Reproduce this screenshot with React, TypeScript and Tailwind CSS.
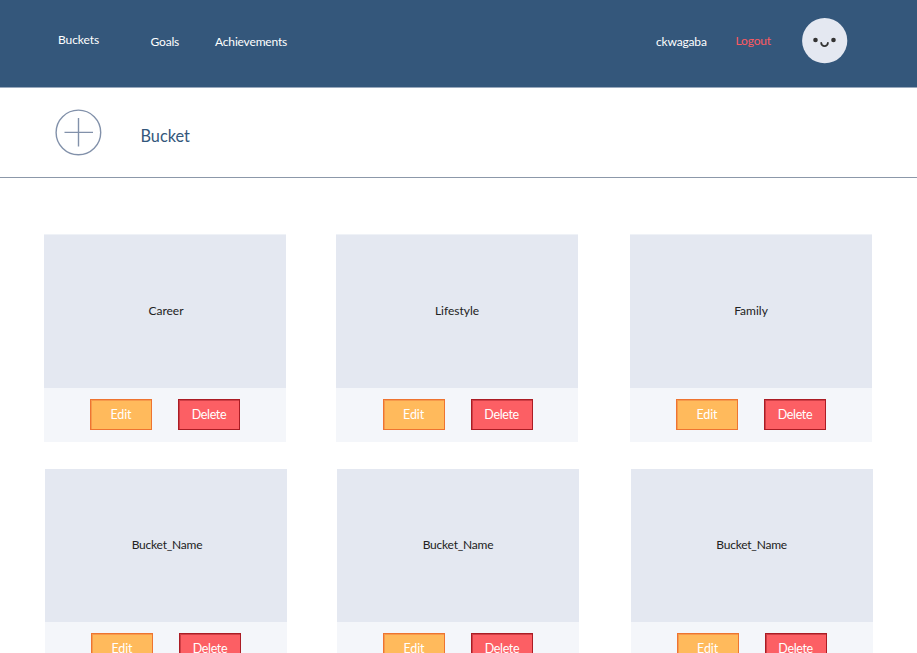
import React from "react";

const buttonBase =
  "h-[31px] w-[62px] border text-[12.5px] leading-[28px] text-white text-center";

type CardProps = { name: string; className?: string; panelClass?: string; actionsClass?: string };

function BucketCard({ name, className = "", panelClass = "", actionsClass = "pl-[46px]" }: CardProps) {
  return (
    <article className={`w-[242px] shrink-0 bg-[#f4f6fa] ${className}`}>
      <div className={`h-[153px] bg-[#e4e8f1] pt-[68px] text-center text-[12px] leading-4 text-[#222222] ${panelClass}`}>
        {name}
      </div>
      <div className={`flex h-[54px] gap-[26px] pt-[11px] ${actionsClass}`}>
        <button className={`${buttonBase} tracking-[-0.1px] border-[#ee7430] bg-[#ffba5c] shadow-[inset_1px_1px_#f69a4c]`}>Edit</button>
        <button className={`${buttonBase} tracking-[-0.35px] border-[#ab1c24] bg-[#fc5f64] shadow-[inset_1px_1px_#cf3f46]`}>Delete</button>
      </div>
    </article>
  );
}

function Avatar() {
  return (
    <svg className="ml-[31px] mt-[18px] h-[46px] w-[46px]" viewBox="0 0 46 46" fill="none">
      <circle cx="22.7" cy="22.7" r="22.6" fill="#e4e8f1" />
      <circle cx="13.5" cy="22" r="2.3" fill="#333333" />
      <circle cx="31.5" cy="22" r="2.3" fill="#333333" />
      <path d="M19.2 24.8a3.35 3.35 0 0 0 6.7 0" stroke="#333333" strokeWidth="1.8" strokeLinecap="round" />
    </svg>
  );
}

export default function App() {
  return (
    <div className="h-[653px] w-[917px] overflow-hidden bg-white font-['Lato',sans-serif]">
      <header className="flex h-[88px] items-start border-b border-[#99a9bd] bg-[#34577b] pl-[58px] text-[12px] leading-4 tracking-[-0.17px] text-white">
        <nav className="flex">
          <a className="mt-8 w-[92.5px] tracking-[-0.08px]">Buckets</a>
          <a className="mt-[34px] w-[64.5px]">Goals</a>
          <a className="mt-[34px] w-[441px]">Achievements</a>
        </nav>
        <span className="mt-[34px] w-[79.5px]">ckwagaba</span>
        <a className="mt-[33px] w-[35.5px] text-[#fc5a61]">Logout</a>
        <Avatar />
      </header>

      <section className="flex h-[90px] items-start border-b border-[#8c98a9] pl-[55px]">
        <svg className="mt-[21px] h-[47px] w-[47px]" viewBox="0 0 47 47" fill="none" stroke="#8291aa" strokeWidth="1.4">
          <circle cx="23.4" cy="23.4" r="22.3" />
          <path d="M9.5 23.4h28.5M23.5 9v28.5" />
        </svg>
        <h1 className="ml-[38.5px] mt-[36px] text-[16.3px] leading-6 text-[#34577b]">Bucket</h1>
      </section>

      <main className="pt-[56px]">
        <div className="flex pl-[44px]">
          <BucketCard name="Career" className="border-t border-[#eff2f7]" panelClass="pl-[2px]" />
          <BucketCard name="Lifestyle" className="ml-[50px] border-t border-[#eff2f7]" actionsClass="pl-[46.6px]" />
          <BucketCard name="Family" className="ml-[52px] border-t border-[#eff2f7]" />
        </div>
        <div className="mt-[27px] flex pl-[45px]">
          <BucketCard name="Bucket_Name" panelClass="pl-[2px] tracking-[-0.22px]" />
          <BucketCard name="Bucket_Name" className="ml-[50px]" panelClass="tracking-[-0.22px]" />
          <BucketCard name="Bucket_Name" className="ml-[51.6px]" panelClass="tracking-[-0.22px]" />
        </div>
      </main>
    </div>
  );
}
